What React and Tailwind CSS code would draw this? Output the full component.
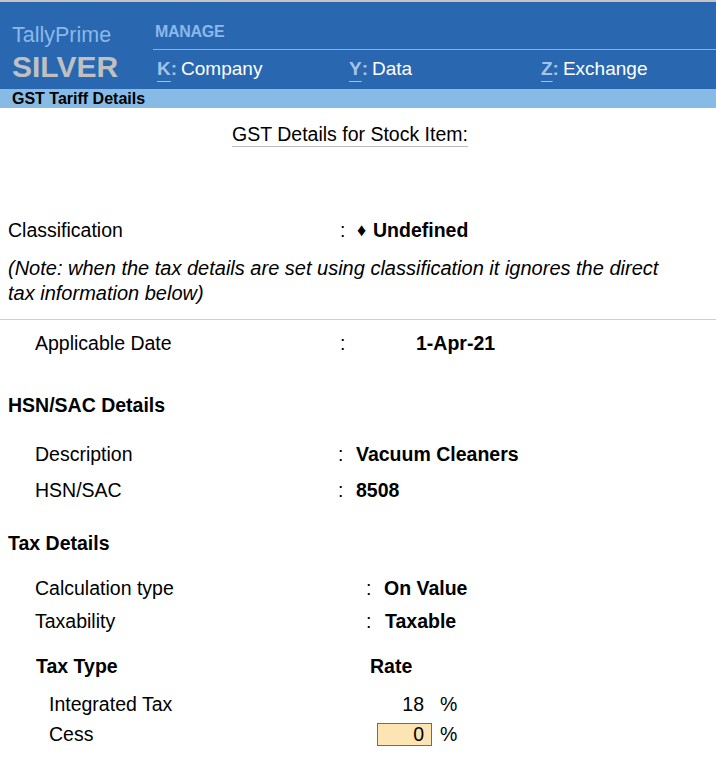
import React from "react";

const F = { fontFamily: '"Liberation Sans", Arial, sans-serif' };

function NavItem({ k, label }) {
  return (
    <div className="w-[192px] shrink-0 flex items-center text-[19px] leading-[24px]">
      <span className="font-bold text-[#a3c3ea] underline decoration-1 underline-offset-[6px] decoration-[#a3c3ea]">{k}</span>
      <span className="font-bold text-[#a3c3ea] mr-[4px]">:</span>
      <span className="text-white">{label}</span>
    </div>
  );
}

export default function App() {
  return (
    <div style={F} className="w-[716px] h-[762px] bg-white text-black overflow-hidden">
      {/* header */}
      <div className="border-t-2 border-[#c4c4c4] bg-[#2967b0] h-[89px] flex">
        <div className="w-[153px] shrink-0 pl-[12px] pt-[21px]">
          <div className="text-[21.5px] leading-[24px] text-[#8cb8e8]">TallyPrime</div>
          <div className="text-[30px] leading-[32px] font-bold text-[#c0c0c0] mt-[4px]">SILVER</div>
        </div>
        <div className="flex-1 min-w-0 flex flex-col overflow-hidden">
          <div className="h-[47px] pt-[20px] pl-[2px] text-[16px] leading-[20px] font-bold text-[#8cb8e8] tracking-[-0.3px]">MANAGE</div>
          <div className="border-t border-[#7fb0e8]" />
          <div className="flex pl-[4px] mt-[7px]">
            <NavItem k="K" label="Company" />
            <NavItem k="Y" label="Data" />
            <NavItem k="Z" label="Exchange" />
          </div>
        </div>
      </div>
      <div className="h-[19px] bg-[#87bbe5] pl-[12px] text-[16px] leading-[19px] font-bold">GST Tariff Details</div>

      {/* title */}
      <div className="flex justify-center pr-[16px] mt-[14px]">
        <div className="text-[19.5px] leading-[24px] border-b border-[#bdbdbd]">GST Details for Stock Item:</div>
      </div>

      <div className="text-[19.5px]">
        <div className="flex items-center h-[24px] leading-[24px] mt-[71px] pl-[8px]">
          <span className="w-[332px]">Classification</span>
          <span className="w-[17px]">:</span>
          <span className="text-[18px] w-[16px]">♦</span>
          <span className="font-bold">Undefined</span>
        </div>
        <div className="italic text-[20px] leading-[25px] mt-[14px] pl-[8px] pr-[40px]">
          (Note: when the tax details are set using classification it ignores the direct tax information below)
        </div>
        <div className="border-t border-[#cfcfcf] mt-[13px]" />
        <div className="flex items-center h-[24px] leading-[24px] mt-[11px] pl-[35px]">
          <span className="w-[305px]">Applicable Date</span>
          <span className="w-[76px]">:</span>
          <span className="font-bold">1-Apr-21</span>
        </div>

        <div className="font-bold h-[24px] leading-[24px] mt-[38px] pl-[8px]">HSN/SAC Details</div>
        <div className="flex items-center h-[24px] leading-[24px] mt-[25px] pl-[35px]">
          <span className="w-[303px]">Description</span>
          <span className="w-[18px]">:</span>
          <span className="font-bold">Vacuum Cleaners</span>
        </div>
        <div className="flex items-center h-[24px] leading-[24px] mt-[12px] pl-[35px]">
          <span className="w-[303px]">HSN/SAC</span>
          <span className="w-[18px]">:</span>
          <span className="font-bold">8508</span>
        </div>

        <div className="font-bold h-[24px] leading-[24px] mt-[29px] pl-[8px]">Tax Details</div>
        <div className="flex items-center h-[24px] leading-[24px] mt-[21px] pl-[35px]">
          <span className="w-[331px]">Calculation type</span>
          <span className="w-[18px]">:</span>
          <span className="font-bold">On Value</span>
        </div>
        <div className="flex items-center h-[24px] leading-[24px] mt-[9px] pl-[35px]">
          <span className="w-[331px]">Taxability</span>
          <span className="w-[19px]">:</span>
          <span className="font-bold">Taxable</span>
        </div>

        <div className="flex items-center h-[24px] leading-[24px] mt-[21px] pl-[36px] font-bold">
          <span className="w-[334px]">Tax Type</span>
          <span>Rate</span>
        </div>
        <div className="flex items-center h-[24px] leading-[24px] mt-[14px] pl-[49px]">
          <span className="w-[328px]">Integrated Tax</span>
          <span className="w-[55px] text-right pr-[8px]">18</span>
          <span className="ml-[8px]">%</span>
        </div>
        <div className="flex items-center h-[24px] leading-[24px] mt-[6px] pl-[49px]">
          <span className="w-[328px]">Cess</span>
          <span className="w-[55px] h-[23px] leading-[21px] text-right pr-[7px] bg-[#fde4b3] border border-[#2b7cc0]">0</span>
          <span className="ml-[8px]">%</span>
        </div>
      </div>
    </div>
  );
}
